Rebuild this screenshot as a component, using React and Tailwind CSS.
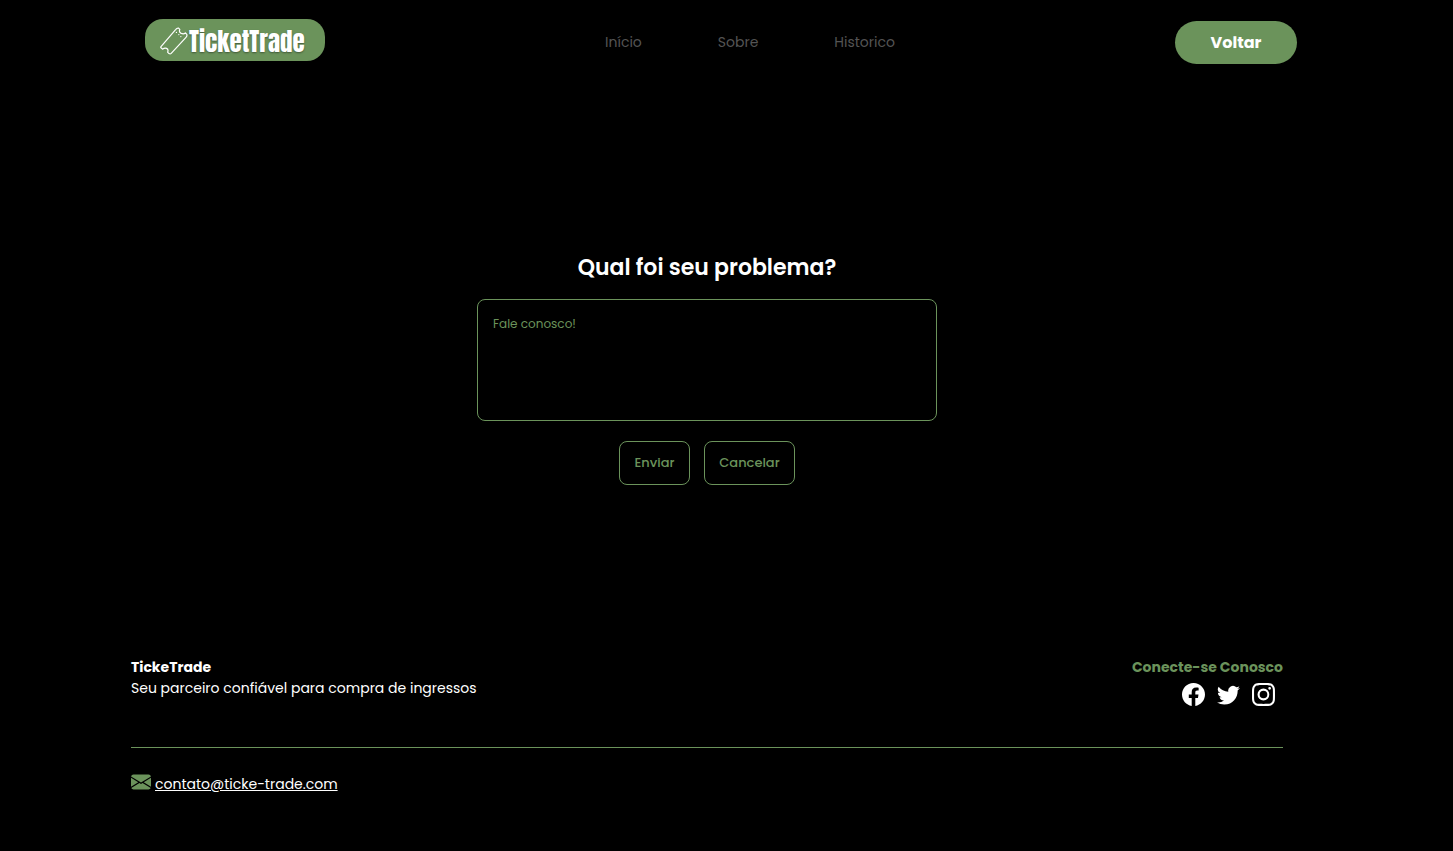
import { BsEnvelopeFill, BsFacebook, BsInstagram, BsTwitter } from "react-icons/bs";

function TicketIcon() {
  return (
    <svg
      viewBox="0 0 28 28"
      className="size-7"
      fill="none"
      stroke="white"
      strokeWidth="1.2"
      strokeLinejoin="round"
      strokeLinecap="round"
      aria-hidden="true"
    >
      <path d="M1 19.600 15.600 2.600Q17 .8 18.600 1.200L19.800 2.400Q18.600 5.200 21.200 6.400Q23.800 7.400 25.400 5.800L26.800 7.400Q27.400 9 26 10.400L11.200 26.400Q10.200 27.400 9 26.600L7.600 25.200Q8.800 22.400 6.600 21.400Q4.400 20.600 2.800 22.200L1.200 21Q.4 20.400 1 19.600Z" />
      <path d="M16.400 5.400h.1M18.800 7.600h.1M20.800 9.600h.1" />
    </svg>
  );
}

const links = ["Início", "Sobre", "Historico"];

const socials = [
  { name: "Facebook", Icon: BsFacebook },
  { name: "Twitter", Icon: BsTwitter },
  { name: "Instagram", Icon: BsInstagram },
];

export default function App() {
  return (
    <div className="flex min-h-screen flex-col bg-black font-['Poppins','Inter',sans-serif] text-white">
      <header className="flex items-start justify-between pt-[19px] pr-[156px] pl-[145px]">
        <a
          href="#inicio"
          className="flex h-[42px] w-[180px] items-center justify-start gap-px rounded-[18px] bg-[#6b935b] pt-0.5 pl-[15px]"
        >
          <TicketIcon />
          <span className="font-['Impact','Anton',sans-serif] text-[25px] leading-none [text-shadow:0_1px_2px_#0006]">
            TicketTrade
          </span>
        </a>
        <nav className="pt-3">
          <ul className="flex gap-[76px] text-sm leading-[22px] text-[#545454]">
            {links.map((link) => (
              <li key={link}>
                <a href={"#" + link.toLowerCase()}>{link}</a>
              </li>
            ))}
          </ul>
        </nav>
        <button
          type="button"
          className="mt-0.5 h-[43px] w-[122px] rounded-full bg-[#6b935b] text-base font-bold"
        >
          Voltar
        </button>
      </header>

      <main className="flex grow flex-col items-center pt-[188px] pr-[170px] pl-[131px]">
        <form className="flex w-full max-w-[460px] flex-col items-center">
          <label htmlFor="problema" className="text-[22px] leading-8 font-semibold">
            Qual foi seu problema?
          </label>
          <textarea
            id="problema"
            placeholder="Fale conosco!"
            className="mt-[15px] block h-[122px] w-full resize-none rounded-lg border border-[#6b935b] bg-transparent p-[15px] text-xs leading-[18px] placeholder:text-[#6b935b] focus:outline-none"
          />
          <div className="mt-5 flex gap-3.5 text-[13px] font-medium text-[#6b935b]">
            <button type="submit" className="h-11 w-[71px] rounded-lg border border-[#6b935b]">
              Enviar
            </button>
            <button type="button" className="h-11 w-[91px] rounded-lg border border-[#6b935b]">
              Cancelar
            </button>
          </div>
        </form>
      </main>

      <footer className="pr-[170px] pb-[56px] pl-[131px] text-sm leading-[21px]">
        <div className="flex justify-between border-b border-[#6b935b] pb-[41px]">
          <div className="pt-px">
            <h2 className="font-bold">TickeTrade</h2>
            <p>Seu parceiro confiável para compra de ingressos</p>
          </div>
          <div className="flex flex-col items-end pt-px">
            <h2 className="font-bold text-[#6b935b]">Conecte-se Conosco</h2>
            <ul className="mt-[5px] flex gap-3 pr-2">
              {socials.map(({ name, Icon }) => (
                <li key={name}>
                  <a href={"#" + name.toLowerCase()} aria-label={name}>
                    <Icon className="block size-[23px]" />
                  </a>
                </li>
              ))}
            </ul>
          </div>
        </div>
        <div className="mt-[26px] flex items-start gap-1">
          <BsEnvelopeFill className="-mt-0.5 size-5 text-[#6b935b]" aria-hidden="true" />
          <a href="mailto:contato@ticke-trade.com" className="underline">
            contato@ticke-trade.com
          </a>
        </div>
      </footer>
    </div>
  );
}
